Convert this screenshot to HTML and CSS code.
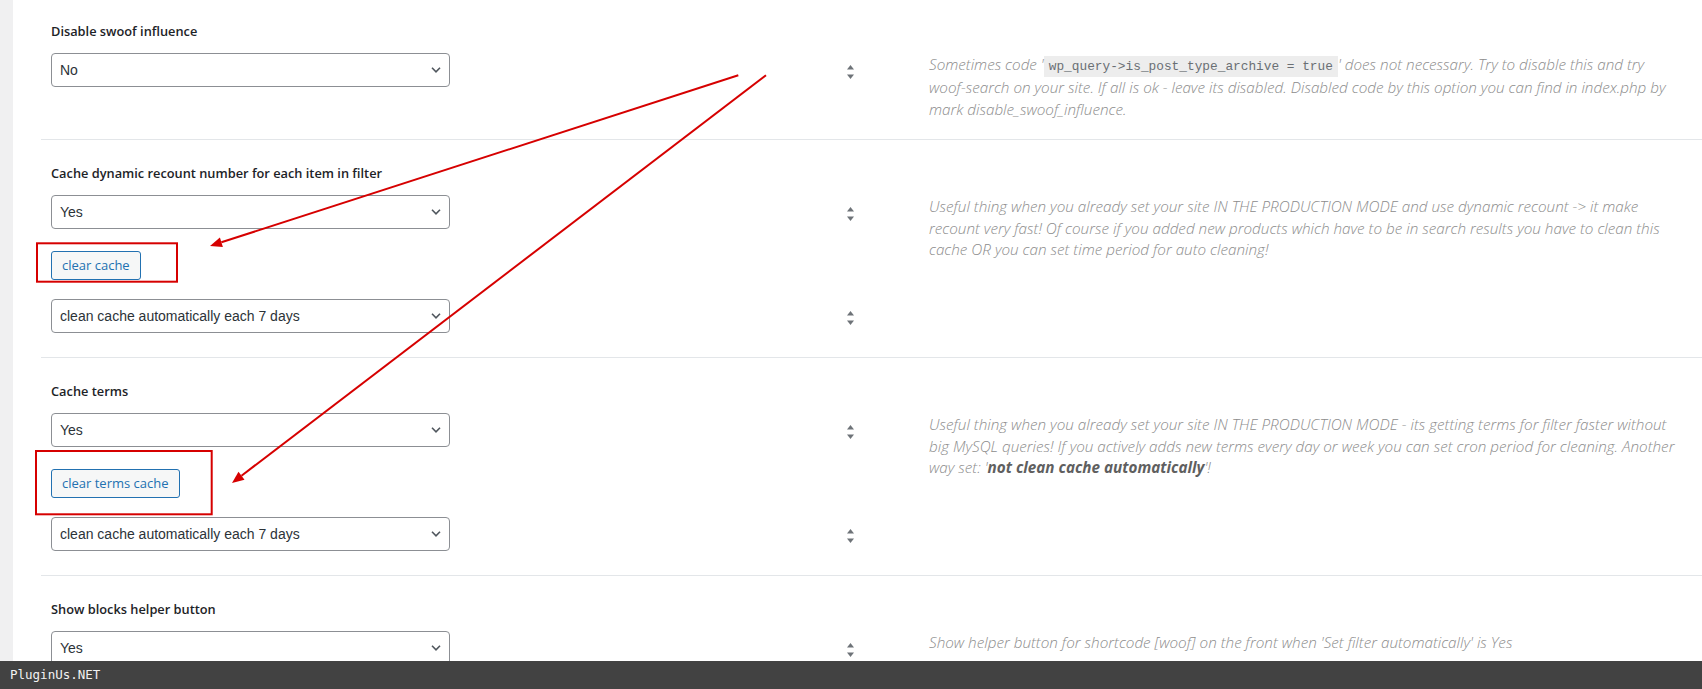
FILE: index.html
```html
<!DOCTYPE html>
<html>
<head>
<meta charset="utf-8">
<link rel="stylesheet" href="styles.css">
</head>
<body>
<div class="page">
  <div class="sidebar"></div>
  <div class="main">
    <div class="section first">
      <div class="label">Disable swoof influence</div>
      <div class="fields">
        <div class="lines">
          <div class="line">
            <div class="select"><span>No</span><svg class="chev" width="10" height="6" viewBox="0 0 10 6"><path d="M1 0.8 L5 4.8 L9 0.8" fill="none" stroke="#50575e" stroke-width="1.6"/></svg></div>
            <svg class="spin" width="7" height="14" viewBox="0 0 7 14"><polygon points="0,4.5 3.5,0 7,4.5" fill="#6e7378"/><polygon points="0,9.5 7,9.5 3.5,14" fill="#6e7378"/></svg>
          </div>
        </div>
        <p class="desc">Sometimes code '<code>wp_query-&gt;is_post_type_archive = true</code>' does not necessary. Try to disable this and try <span class="nowrap">woof-search</span> on your site. If all is ok - leave its disabled. Disabled code by this option you can find in index.php by mark disable_swoof_influence.</p>
      </div>
    </div>

    <div class="section">
      <div class="label">Cache dynamic recount number for each item in filter</div>
      <div class="fields">
        <div class="lines">
          <div class="line">
            <div class="select"><span>Yes</span><svg class="chev" width="10" height="6" viewBox="0 0 10 6"><path d="M1 0.8 L5 4.8 L9 0.8" fill="none" stroke="#50575e" stroke-width="1.6"/></svg></div>
            <svg class="spin" width="7" height="14" viewBox="0 0 7 14"><polygon points="0,4.5 3.5,0 7,4.5" fill="#6e7378"/><polygon points="0,9.5 7,9.5 3.5,14" fill="#6e7378"/></svg>
          </div>
          <div class="line btn-line">
            <button class="btn">clear cache</button>
          </div>
          <div class="line after-btn">
            <div class="select"><span>clean cache automatically each 7 days</span><svg class="chev" width="10" height="6" viewBox="0 0 10 6"><path d="M1 0.8 L5 4.8 L9 0.8" fill="none" stroke="#50575e" stroke-width="1.6"/></svg></div>
            <svg class="spin" width="7" height="14" viewBox="0 0 7 14"><polygon points="0,4.5 3.5,0 7,4.5" fill="#6e7378"/><polygon points="0,9.5 7,9.5 3.5,14" fill="#6e7378"/></svg>
          </div>
        </div>
        <p class="desc">Useful thing when you already set your site IN THE PRODUCTION MODE and use dynamic recount -&gt; it make recount very fast! Of course if you added new products which have to be in search results you have to clean this cache OR you can set time period for auto cleaning!</p>
      </div>
    </div>

    <div class="section">
      <div class="label">Cache terms</div>
      <div class="fields">
        <div class="lines">
          <div class="line">
            <div class="select"><span>Yes</span><svg class="chev" width="10" height="6" viewBox="0 0 10 6"><path d="M1 0.8 L5 4.8 L9 0.8" fill="none" stroke="#50575e" stroke-width="1.6"/></svg></div>
            <svg class="spin" width="7" height="14" viewBox="0 0 7 14"><polygon points="0,4.5 3.5,0 7,4.5" fill="#6e7378"/><polygon points="0,9.5 7,9.5 3.5,14" fill="#6e7378"/></svg>
          </div>
          <div class="line btn-line">
            <button class="btn">clear terms cache</button>
          </div>
          <div class="line after-btn">
            <div class="select"><span>clean cache automatically each 7 days</span><svg class="chev" width="10" height="6" viewBox="0 0 10 6"><path d="M1 0.8 L5 4.8 L9 0.8" fill="none" stroke="#50575e" stroke-width="1.6"/></svg></div>
            <svg class="spin" width="7" height="14" viewBox="0 0 7 14"><polygon points="0,4.5 3.5,0 7,4.5" fill="#6e7378"/><polygon points="0,9.5 7,9.5 3.5,14" fill="#6e7378"/></svg>
          </div>
        </div>
        <p class="desc">Useful thing when you already set your site IN THE PRODUCTION MODE - its getting terms for filter faster without<br>big MySQL queries! If you actively adds new terms every day or week you can set cron period for cleaning. Another way set: '<b>not clean cache automatically</b>'!</p>
      </div>
    </div>

    <div class="section">
      <div class="label">Show blocks helper button</div>
      <div class="fields">
        <div class="lines">
          <div class="line">
            <div class="select"><span>Yes</span><svg class="chev" width="10" height="6" viewBox="0 0 10 6"><path d="M1 0.8 L5 4.8 L9 0.8" fill="none" stroke="#50575e" stroke-width="1.6"/></svg></div>
            <svg class="spin" width="7" height="14" viewBox="0 0 7 14"><polygon points="0,4.5 3.5,0 7,4.5" fill="#6e7378"/><polygon points="0,9.5 7,9.5 3.5,14" fill="#6e7378"/></svg>
          </div>
        </div>
        <p class="desc">Show helper button for shortcode [woof] on the front when 'Set filter automatically' is Yes</p>
      </div>
    </div>
  </div>

  <svg class="annot" width="1702" height="689" viewBox="0 0 1702 689">
    <g fill="none" stroke="#d60000" stroke-width="2">
      <rect x="37" y="243.3" width="140" height="38.4"/>
      <rect x="36" y="451" width="175.7" height="63.3"/>
      <line x1="738.3" y1="75.3" x2="221.4" y2="242.3"/>
      <line x1="766" y1="75.3" x2="241.5" y2="475.7"/>
    </g>
    <g fill="#d60000">
      <polygon points="210,246 219.9,237.5 222.9,247.1"/>
      <polygon points="232,483 238.5,471.7 244.5,479.7"/>
    </g>
  </svg>

  <div class="footer">PluginUs.NET</div>
</div>
</body>
</html>
```

FILE: styles.css
```css
html, body {
  margin: 0;
  padding: 0;
  height: 100%;
  overflow: hidden;
  background: #ffffff;
}

.page {
  position: relative;
  display: flex;
  min-height: 100%;
  font-family: "Open Sans", "Liberation Sans", sans-serif;
}

.sidebar {
  flex: none;
  width: 13px;
  background: #f0f0f1;
}

.main {
  flex: 1;
  padding-left: 28px;
}

.section {
  border-bottom: 1px solid #e3e6e9;
  padding: 24px 16px 24px 10px;
}

.section.first {
  padding-top: 22px;
}

.label {
  font-size: 12.8px;
  font-weight: 600;
  line-height: 18px;
  color: #1d2327;
  margin-bottom: 13px;
}

.fields {
  display: flex;
  align-items: flex-start;
}

.lines {
  flex: none;
  width: 878px;
  display: flex;
  flex-direction: column;
}

.line {
  display: flex;
  align-items: center;
}

.btn-line {
  margin-top: 22px;
}

.after-btn {
  margin-top: 19px;
}

.select {
  box-sizing: border-box;
  width: 399px;
  height: 34px;
  border: 1px solid #8c8f94;
  border-radius: 4px;
  background: #fff;
  display: flex;
  align-items: center;
  justify-content: space-between;
  padding: 0 8px 0 8px;
  font-family: "Liberation Sans", Arial, sans-serif;
  font-size: 14px;
  color: #2c3338;
}

.chev {
  display: block;
  flex: none;
}

.spin {
  display: block;
  flex: none;
  margin-left: 397px;
  margin-top: 4px;
}

.btn {
  box-sizing: border-box;
  height: 29px;
  padding: 0 10px;
  border: 1px solid #2271b1;
  border-radius: 3px;
  background: #f6f7f7;
  color: #2271b1;
  font-family: "Open Sans", "Liberation Sans", sans-serif;
  font-size: 13px;
  line-height: 27px;
}

.desc {
  flex: 1;
  margin: 1px 0 -5px 0;
  font-size: 15.25px;
  font-weight: 300;
  line-height: 21.4px;
  font-style: italic;
  color: #8c8c8c;
}

.nowrap {
  white-space: nowrap;
}

.desc b {
  color: #5f5f5f;
  font-weight: 700;
}

.desc code {
  font-family: "Liberation Mono", "DejaVu Sans Mono", monospace;
  font-style: normal;
  font-size: 12.8px;
  color: #6a6f74;
  background: rgba(0, 0, 0, 0.07);
  padding: 3px 5px 3px;
}

.annot {
  position: absolute;
  left: 0;
  top: 0;
  pointer-events: none;
}

.footer {
  position: fixed;
  left: 0;
  right: 0;
  bottom: 0;
  height: 28px;
  background: #424242;
  color: #f2f2f2;
  font-family: "DejaVu Sans Mono", monospace;
  font-size: 12.5px;
  line-height: 28px;
  padding-left: 10px;
}
```
